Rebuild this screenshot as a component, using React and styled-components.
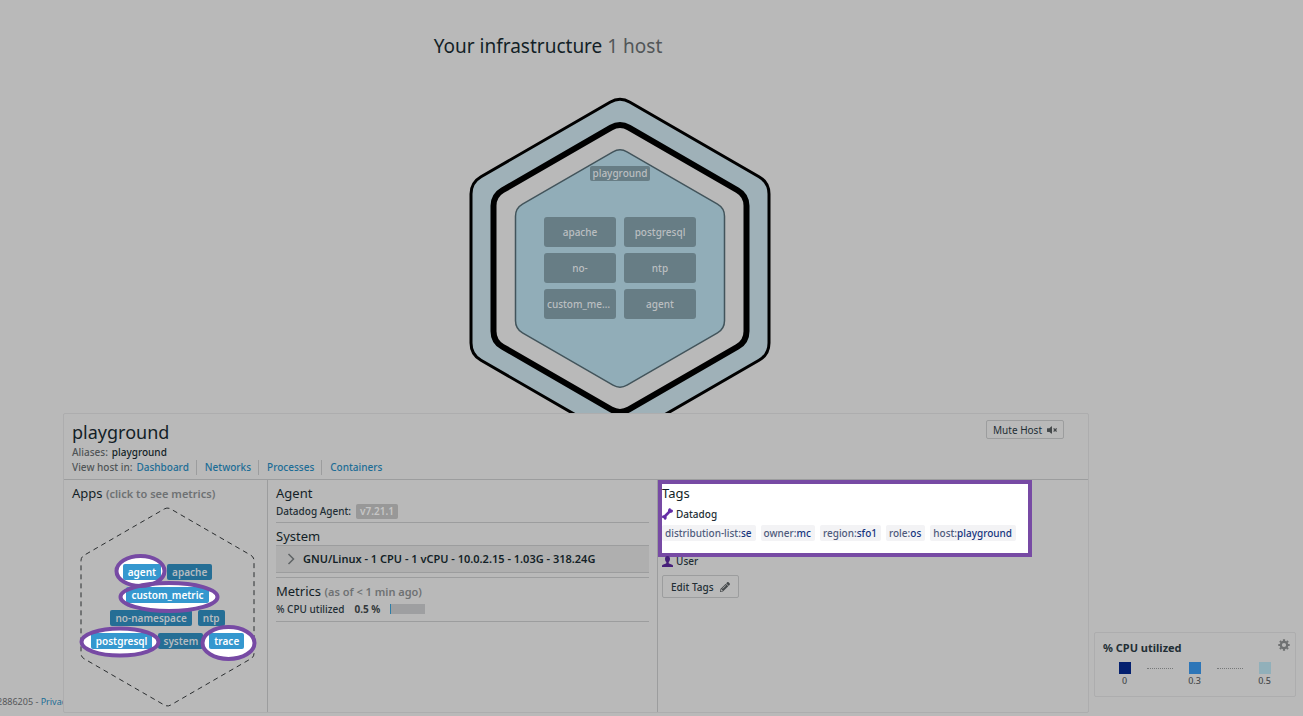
import React from "react";
import styled, { createGlobalStyle } from "styled-components";
import { FaPencilAlt, FaVolumeMute } from "react-icons/fa";

const Global = createGlobalStyle`
  * { box-sizing: border-box; }
  body { margin: 0; background: #b9b9b9; }
  body, button { font-family: "Noto Sans", sans-serif; font-size: 10px; font-weight: 500; line-height: 16px; color: #222e35; }
  h1, h2, h3, p { margin: 0; font-weight: 400; }
  a { color: #1c6d96; text-decoration: none; }
  button { cursor: pointer; }
`;

const Page = styled.div`
  display: flex;
  flex-direction: column;
  min-height: 100vh;
  overflow: hidden;
`;

const Stage = styled.main`
  flex: 1 0 413px;
  height: 413px;
  overflow: hidden;
`;

const Title = styled.h1`
  padding: 32px 207px 0 0;
  text-align: center;
  font-size: 19px;
  line-height: 28px;
  color: #131f27;
  span { color: #525658; }
`;

const MapRow = styled.div`
  display: flex;
  justify-content: center;
  padding: 36px 63px 0 0;
`;

const HostHex = styled.div`
  position: relative;
  width: 304px;
  height: 346px;
  display: flex;
  flex-direction: column;
  align-items: center;
  padding-top: 70px;
`;

const Drawing = styled.svg`
  position: absolute;
  inset: 0;
  overflow: visible;
  pointer-events: none;
  z-index: ${(p) => p.$z || 0};
`;

const HostName = styled.span`
  position: relative;
  z-index: 1;
  height: 15px;
  padding: 0 3px;
  border-radius: 2px;
  background: #677d85;
  color: #bbbfc1;
  line-height: 14px;
`;

const TileGrid = styled.div`
  position: relative;
  z-index: 1;
  display: grid;
  grid-template-columns: 72px 72px;
  gap: 6px 8px;
  margin-top: 36px;
`;

const Tile = styled.button`
  height: 30px;
  padding: 0 3px;
  border: 0;
  border-radius: 3px;
  background: #677d85;
  color: #bbbfc1;
  overflow: hidden;
  text-overflow: ellipsis;
  white-space: nowrap;
`;

const Bottom = styled.div`
  display: grid;
  grid-template-columns: 63px minmax(0, 1fr) 214px;
  align-items: end;
  padding-bottom: 3px;
`;

const Footer = styled.footer`
  overflow: hidden;
  white-space: nowrap;
  font-size: 9px;
  font-weight: 400;
  line-height: 14px;
  text-indent: -3px;
  padding-bottom: 4px;
  color: #55585a;
`;

const Panel = styled.section`
  border: 1px solid #adadae;
  border-radius: 2px;
`;

const PanelHead = styled.header`
  display: flex;
  justify-content: space-between;
  align-items: flex-start;
  padding: 6px 24px 4px 8px;
  border-bottom: 1px solid #9c9d9e;
`;

const HostTitle = styled.h2`
  font-size: 18px;
  line-height: 25px;
  color: #131f27;
`;

const Line = styled.div`
  display: flex;
  align-items: center;
  line-height: 15px;
  color: #505557;
  gap: 4px;
  b { font-weight: 500; color: #131f27; }
`;

const Links = styled.nav`
  display: flex;
  a { padding: 0 7px 0 8px; line-height: 15px; border-left: 1px solid #9c9d9e; }
  a:first-child { border: 0; padding-left: 0; }
`;

const OutlineButton = styled.button`
  display: inline-flex;
  align-items: center;
  gap: ${(p) => (p.$small ? 5 : 6)}px;
  height: ${(p) => (p.$small ? 19 : 23)}px;
  padding: 0 ${(p) => (p.$small ? 6 : 8)}px;
  border: 1px solid #9c9d9e;
  border-radius: 2px;
  background: transparent;
  font-weight: ${(p) => (p.$small ? 400 : 500)};
  svg { color: #45494b; }
`;

const Columns = styled.div`
  display: grid;
  grid-template-columns: 204px minmax(0, 390fr) minmax(0, 430fr);
`;

const Column = styled.div`
  padding: ${(p) => (p.$flush ? "0" : "5px 8px 0")};
  border-right: 1px solid #9c9d9e;
  &:last-child { border-right: 0; }
`;

const Heading = styled.h3`
  font-size: 13px;
  line-height: 17px;
  color: #131f27;
  small { font-size: 11px; font-weight: 600; color: #6e7173; }
`;

const AppHex = styled.div`
  position: relative;
  height: 210px;
  padding: 62px 0 0 4px;
  display: flex;
  flex-direction: column;
  gap: 7px;
`;

const ChipRow = styled.div`
  display: flex;
  justify-content: center;
  gap: 6px;
`;

const Chip = styled.button`
  position: relative;
  z-index: ${(p) => (p.$lit ? 2 : 0)};
  height: 16px;
  padding: 0 5px;
  border: 0;
  border-radius: 2px;
  background: ${(p) => (p.$lit ? "#3598cf" : "#256e95")};
  color: ${(p) => (p.$lit ? "#fff" : "#b6bcc0")};
  font-weight: 600;
  line-height: 15px;
  white-space: nowrap;
`;

const Block = styled.div`
  border-bottom: 1px solid #9c9d9e;
  padding-bottom: ${(p) => p.$end}px;
  margin-bottom: 5px;
`;

const Field = styled.div`
  display: flex;
  align-items: center;
  line-height: 18px;
  gap: ${(p) => p.$gap || 5}px;
  b { color: #33383a; }
`;

const Version = styled.span`
  height: 15px;
  padding: 0 4px;
  border-radius: 2px;
  background: #989898;
  color: #c6c6c6;
  font-weight: 600;
  line-height: 14px;
`;

const SystemRow = styled.button`
  display: flex;
  align-items: center;
  gap: 8px;
  width: 100%;
  height: 28px;
  padding: 0 11px;
  border: solid #9c9d9e;
  border-width: 1px 0;
  background: #afafaf;
  color: #131f27;
  font-size: 11px;
  font-weight: 600;
`;

const Meter = styled.div`
  width: 35px;
  height: 10px;
  background: #9e9fa1;
  border-left: 1px solid #2c7ea8;
`;

const TagBox = styled.div`
  width: 374px;
  height: 77px;
  padding-top: 1px;
  border: 4px solid #774aa4;
  background: #fff;
`;

const TagSource = styled.div`
  display: flex;
  align-items: center;
  gap: 3px;
  line-height: 16px;
  margin-top: ${(p) => p.$top}px;
`;

const TagList = styled.div`
  display: flex;
  gap: 5px;
  margin-top: 3px;
`;

const Tag = styled.span`
  height: 16px;
  padding: 0 4px 0 3px;
  border-radius: 2px;
  background: #f3f3f5;
  color: #4f5b7c;
  white-space: nowrap;
  b { font-weight: 500; color: #16357e; }
`;

const UserTags = styled.div`
  padding: 0 4px;
  button { margin-top: 6px; }
`;

const Legend = styled.aside`
  margin: 0 7px 16px 5px;
  padding: 6px 5px 9px 8px;
  border: 1px solid #adadae;
  border-radius: 2px;
`;

const LegendHead = styled.div`
  display: flex;
  justify-content: space-between;
  font-size: 11px;
  font-weight: 700;
  height: 23px;
  line-height: 17px;
`;

const IconButton = styled.button`
  padding: 0;
  border: 0;
  background: none;
  height: 12px;
  line-height: 0;
`;

const Scale = styled.div`
  display: flex;
  justify-content: space-between;
  align-items: flex-start;
  padding: 0 16px 0 12px;
  hr { width: 26px; margin: 6px 0 0; border: 0; border-top: 1px dotted #77797a; }
`;

const Stop = styled.div`
  width: 19px;
  display: flex;
  flex-direction: column;
  align-items: center;
  font-size: 9px;
  line-height: 13px;
  color: #484c4e;
  i { width: 12px; height: 12px; background: ${(p) => p.$color}; }
`;

/* Pointy-top regular hexagon with arcs of radius r at its corners. */
function hexPath(cx, cy, halfWidth, r) {
  const R = (halfWidth * 2) / Math.sqrt(3);
  const t = r / Math.sqrt(3);
  const pts = [0, 1, 2, 3, 4, 5].map((i) => {
    const a = (Math.PI / 3) * i - Math.PI / 2;
    return [cx + R * Math.cos(a), cy + R * Math.sin(a)];
  });
  const toward = (a, b) => [a[0] + ((b[0] - a[0]) * t) / R, a[1] + ((b[1] - a[1]) * t) / R];
  return (
    pts
      .map((p, i) => {
        const s = toward(p, pts[(i + 5) % 6]);
        const e = toward(p, pts[(i + 1) % 6]);
        return `${i ? "L" : "M"}${s[0]} ${s[1]} A${r} ${r} 0 0 1 ${e[0]} ${e[1]}`;
      })
      .join(" ") + "Z"
  );
}

const rings = [
  { cx: 68.5, cy: 69, rx: 24, ry: 15 },
  { cx: 97, cy: 95, rx: 48.5, ry: 14 },
  { cx: 48, cy: 140, rx: 38.5, ry: 13.5 },
  { cx: 156.5, cy: 141, rx: 26, ry: 16 },
];

const appRows = [
  [["agent", true], ["apache"]],
  [["custom_metric", true]],
  [["no-namespace"], ["ntp"]],
  [["postgresql", true], ["system"], ["trace", true]],
];

const tiles = ["apache", "postgresql", "no-", "ntp", "custom_metric", "agent"];

const tags = [
  ["distribution-list", "se"],
  ["owner", "mc"],
  ["region", "sfo1"],
  ["role", "os"],
  ["host", "playground"],
];

const BoneIcon = () => (
  <svg width="11" height="12" viewBox="0 0 11 12" fill="#632ca6">
    <path d="M2 7.300 6 3.200C6 2 6.200 1.200 6.900.5 7.700-.2 8.900.3 8.900 1.600c1.200-.1 2.100.4 2.100 1.500 0 1.300-1.500 1.800-3 1.900L4.600 8.600c.2 1.200 0 2.300-.7 2.900-.8.7-2 .2-2-1.200C.7 10.300 0 9.800 0 8.800 0 7.600 1 7.300 2 7.300Z" />
  </svg>
);

const PersonIcon = () => (
  <svg width="11" height="11" viewBox="0 0 11 11" fill="#47207a">
    <path d="M5.500 0C3.800 0 3 1.200 3 2.800c0 1.500.5 2.700 1.300 3.300v1.100C3.600 8 .5 8 0 9.500V11h11V9.500C10.500 8 7.400 8 6.700 7.200V6.100C7.500 5.500 8 4.300 8 2.800 8 1.200 7.200 0 5.500 0Z" />
  </svg>
);

const GearIcon = () => (
  <svg width="12" height="12" viewBox="-6 -6 12 12" fill="none" stroke="#6f7172">
    <circle r="3.200" strokeWidth="2.200" />
    {[0, 45, 90, 135].map((a) => (
      <path key={a} d="M0-5.700V-4M0 4v1.700" strokeWidth="2.200" transform={`rotate(${a})`} />
    ))}
  </svg>
);

const ChevronIcon = () => (
  <svg width="8" height="12" viewBox="0 0 8 12" fill="none" stroke="#5f6365" strokeWidth="1.500">
    <path d="M1.500 1l5 5-5 5" />
  </svg>
);

export default function App() {
  return (
    <Page>
      <Global />
      <Stage>
        <Title>
          Your infrastructure <span>1 host</span>
        </Title>
        <MapRow>
          <HostHex>
            <Drawing width="304" height="346">
              <path d={hexPath(152, 172.5, 149, 20)} fill="#9fb1b8" stroke="#000" strokeWidth="3" />
              <path d={hexPath(152, 172.5, 126.5, 18)} fill="#b9b9b9" stroke="#000" strokeWidth="6" />
              <path d={hexPath(152, 172.5, 104.5, 14)} fill="#91adb8" stroke="#42545b" strokeWidth="1.5" />
            </Drawing>
            <HostName>playground</HostName>
            <TileGrid>
              {tiles.map((t) => (
                <Tile key={t}>{t}</Tile>
              ))}
            </TileGrid>
          </HostHex>
        </MapRow>
      </Stage>

      <Bottom>
        <Footer>
          2886205 - <a href="#privacy">Privacy</a>
        </Footer>

        <Panel>
          <PanelHead>
            <div>
              <HostTitle>playground</HostTitle>
              <Line>
                Aliases: <b>playground</b>
              </Line>
              <Line>
                View host in:
                <Links>
                  <a href="#dashboard">Dashboard</a>
                  <a href="#networks">Networks</a>
                  <a href="#processes">Processes</a>
                  <a href="#containers">Containers</a>
                </Links>
              </Line>
            </div>
            <OutlineButton $small>
              Mute Host <FaVolumeMute size={10} />
            </OutlineButton>
          </PanelHead>

          <Columns>
            <Column>
              <Heading>
                Apps <small>(click to see metrics)</small>
              </Heading>
              <AppHex>
                <Drawing width="190" height="210">
                  <path
                    d={hexPath(95.5, 105, 86.5, 6)}
                    fill="none"
                    stroke="#2b2e30"
                    strokeDasharray="5 4"
                  />
                </Drawing>
                <Drawing $z={1} width="190" height="210" fill="#fff">
                  {rings.map((r) => (
                    <ellipse key={r.cx} {...r} />
                  ))}
                </Drawing>
                {appRows.map((row, i) => (
                  <ChipRow key={i}>
                    {row.map(([name, lit]) => (
                      <Chip key={name} $lit={lit}>
                        {name}
                      </Chip>
                    ))}
                  </ChipRow>
                ))}
                <Drawing $z={3} width="190" height="210" fill="none" stroke="#774aa4" strokeWidth="4">
                  {rings.map((r) => (
                    <ellipse key={r.cx} {...r} />
                  ))}
                </Drawing>
              </AppHex>
            </Column>

            <Column>
              <Block $end={2}>
                <Heading>Agent</Heading>
                <Field>
                  Datadog Agent: <Version>v7.21.1</Version>
                </Field>
              </Block>
              <Block $end={4}>
                <Heading>System</Heading>
                <SystemRow>
                  <ChevronIcon />
                  GNU/Linux - 1 CPU - 1 vCPU - 10.0.2.15 - 1.03G - 318.24G
                </SystemRow>
              </Block>
              <Block $end={3}>
                <Heading>
                  Metrics <small>(as of &lt; 1 min ago)</small>
                </Heading>
                <Field $gap={10}>
                  % CPU utilized <b>0.5 %</b> <Meter />
                </Field>
              </Block>
            </Column>

            <Column $flush>
              <TagBox>
                <Heading>Tags</Heading>
                <TagSource $top={4}>
                  <BoneIcon /> Datadog
                </TagSource>
                <TagList>
                  {tags.map(([k, v]) => (
                    <Tag key={k}>
                      {k}:<b>{v}</b>
                    </Tag>
                  ))}
                </TagList>
              </TagBox>
              <UserTags>
                <TagSource $top={-4}>
                  <PersonIcon /> User
                </TagSource>
                <OutlineButton>
                  Edit Tags <FaPencilAlt size={10} />
                </OutlineButton>
              </UserTags>
            </Column>
          </Columns>
        </Panel>

        <Legend>
          <LegendHead>
            % CPU utilized
            <IconButton aria-label="Settings">
              <GearIcon />
            </IconButton>
          </LegendHead>
          <Scale>
            <Stop $color="#04206f">
              <i />0
            </Stop>
            <hr />
            <Stop $color="#2d76b8">
              <i />
              0.3
            </Stop>
            <hr />
            <Stop $color="#91b0ba">
              <i />
              0.5
            </Stop>
          </Scale>
        </Legend>
      </Bottom>
    </Page>
  );
}
